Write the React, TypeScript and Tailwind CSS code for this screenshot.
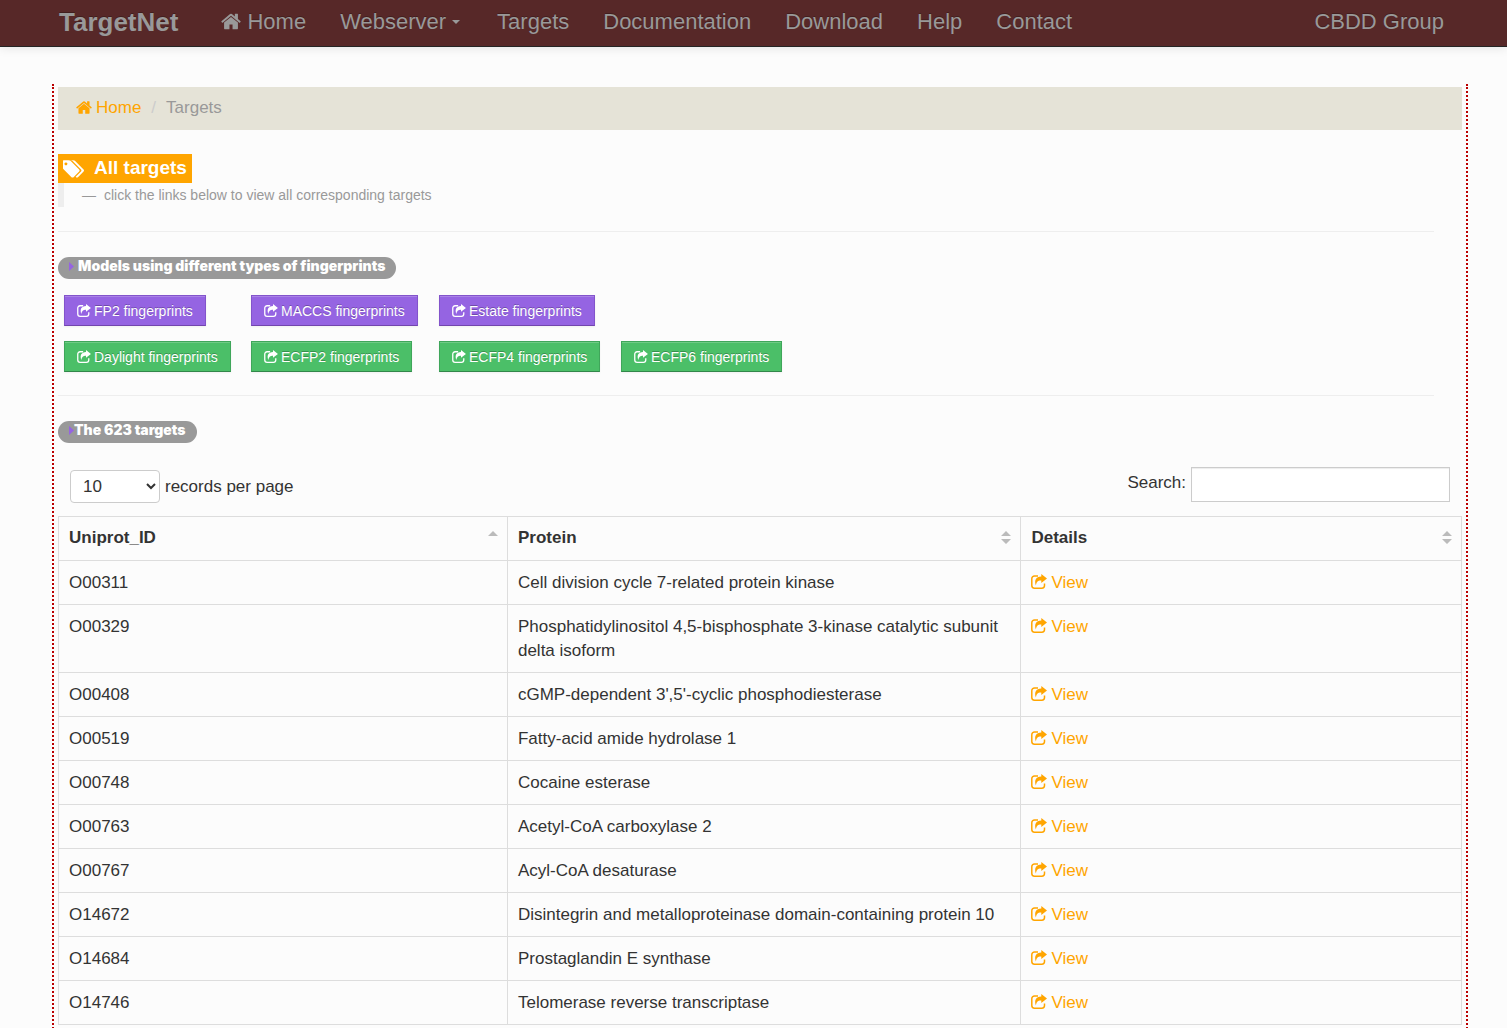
import { useState } from "react";

interface Target {
  id: string;
  protein: string;
}

interface IconProps {
  className?: string;
}

const navLinks = ["Targets", "Documentation", "Download", "Help", "Contact"];

const purpleModels = ["FP2", "MACCS", "Estate"];
const greenModels = ["Daylight", "ECFP2", "ECFP4", "ECFP6"];

const targets: Target[] = [
  { id: "O00311", protein: "Cell division cycle 7-related protein kinase" },
  {
    id: "O00329",
    protein:
      "Phosphatidylinositol 4,5-bisphosphate 3-kinase catalytic subunit delta isoform",
  },
  { id: "O00408", protein: "cGMP-dependent 3',5'-cyclic phosphodiesterase" },
  { id: "O00519", protein: "Fatty-acid amide hydrolase 1" },
  { id: "O00748", protein: "Cocaine esterase" },
  { id: "O00763", protein: "Acetyl-CoA carboxylase 2" },
  { id: "O00767", protein: "Acyl-CoA desaturase" },
  {
    id: "O14672",
    protein: "Disintegrin and metalloproteinase domain-containing protein 10",
  },
  { id: "O14684", protein: "Prostaglandin E synthase" },
  { id: "O14746", protein: "Telomerase reverse transcriptase" },
];

const HomeIcon = ({ className }: IconProps) => (
  <svg className={className} viewBox="64 128 1664 1536" fill="currentColor" aria-hidden="true">
    <path d="M1472 992v480q0 26-19 45t-45 19h-384v-384h-256v384h-384q-26 0-45-19t-19-45v-480q0-1 .5-3t.5-3l575-474 575 474q1 2 1 6zm223-69l-62 74q-8 9-21 11h-3q-13 0-21-7l-692-577-692 577q-12 8-24 7-13-2-21-11l-62-74q-8-10-7-23.5t11-21.5l719-599q32-26 76-26t76 26l244 204v-195q0-14 9-23t23-9h192q14 0 23 9t9 23v408l219 182q10 8 11 21.5t-7 23.5z" />
  </svg>
);

const ShareIcon = ({ className }: IconProps) => (
  <svg className={className} viewBox="0 0 16 15" aria-hidden="true">
    <path
      d="M7 2H3.500A2.700 2.700 0 0 0 .8 4.700V11.500A2.700 2.700 0 0 0 3.500 14.200H10.800A2.700 2.700 0 0 0 13.500 11.500V9.500"
      fill="none"
      stroke="currentColor"
      strokeWidth="1.5"
    />
    <path
      d="M10.300 0L16 4.500L10.300 9V6.600C7.400 6.400 5.600 7.400 4.900 11.500C3 6.500 4.800 2.500 10.300 2.400Z"
      fill="currentColor"
    />
  </svg>
);

const TagsIcon = ({ className }: IconProps) => (
  <svg className={className} viewBox="0 128 1835 1536" fill="currentColor" aria-hidden="true">
    <path d="M384 448q0-53-37.5-90.5t-90.5-37.5-90.5 37.5-37.5 90.5 37.5 90.5 90.5 37.5 90.5-37.5 37.5-90.5zm1067 576q0 53-37 90l-491 492q-39 37-91 37-53 0-90-37l-715-716q-38-37-64.5-101t-26.5-117v-416q0-52 38-90t90-38h416q53 0 117 26.5t102 64.5l715 714q37 39 37 91zm384 0q0 53-37 90l-491 492q-39 37-91 37-36 0-59-14t-53-45l470-470q37-37 37-90 0-52-37-91l-715-714q-38-38-102-64.5t-117-26.5h224q53 0 117 26.5t102 64.5l715 714q37 39 37 91z" />
  </svg>
);

const SortIcon = ({ ascending }: { ascending?: boolean }) => (
  <svg className="mb-[2px] h-[14px] w-[10px] text-[#bbb]" viewBox="0 0 10 14" fill="currentColor" aria-hidden="true">
    <path d={ascending ? "M0 6L5 1L10 6Z" : "M0 6L5 1L10 6ZM0 9H10L5 14Z"} />
  </svg>
);

const SectionPill = ({ text, tight }: { text: string; tight?: boolean }) => (
  <h2
    className={`flex h-[22px] w-fit items-start rounded-full bg-[#999] px-[11px] font-['Inter','Liberation_Sans',sans-serif] text-[14px] leading-[18px] font-black text-white ${tight ? "gap-0" : "gap-1"}`}
  >
    <svg className="mt-[5px] h-[9px] w-[5px] text-[#9564e2]" viewBox="0 0 5 9" fill="currentColor" aria-hidden="true">
      <path d="M0 0L5 4.500L0 9Z" />
    </svg>
    {text}
  </h2>
);

const ModelButton = ({ name, color }: { name: string; color: "purple" | "green" }) => (
  <button
    type="button"
    className={`flex h-[31px] w-fit items-center gap-[3px] border px-3 pt-px text-[14px] whitespace-nowrap text-white [text-shadow:0_-1px_0_rgba(0,0,0,0.25)] shadow-[inset_0_1px_0_rgba(255,255,255,0.2),0_1px_2px_rgba(0,0,0,0.05)] ${
      color === "purple"
        ? "border-[#8354cb] border-b-[#7246ad] bg-[#9564e2]"
        : "border-[#3fa65a] border-b-[#32874a] bg-[#4bbf68]"
    }`}
  >
    <ShareIcon className="mb-[2px] h-[13px] w-[14px]" />
    {name} fingerprints
  </button>
);

const Navbar = () => (
  <nav className="flex h-[47px] items-center border-b border-[#252525] bg-[#572828] pr-[46px] pb-[3px] pl-[59px] text-[22px] text-[#999] shadow-[0_1px_10px_rgba(0,0,0,0.1)] [text-shadow:0_-1px_0_rgba(0,0,0,0.25)]">
    <a href="#" className="mr-[26px] text-[26px] font-bold">
      TargetNet
    </a>
    <a href="#" className="flex items-center gap-[6px] px-[17px]">
      <HomeIcon className="h-[19px] w-[20px]" />
      Home
    </a>
    <a href="#" className="flex items-center gap-[6px] px-[17px]">
      Webserver
      <svg className="mr-[3px] h-[4px] w-[8px]" viewBox="0 0 8 4" fill="currentColor" aria-hidden="true">
        <path d="M0 0H8L4 4Z" />
      </svg>
    </a>
    {navLinks.map((link) => (
      <a key={link} href="#" className="px-[17px]">
        {link}
      </a>
    ))}
    <a href="#" className="ml-auto px-[17px]">
      CBDD Group
    </a>
  </nav>
);

const App = () => {
  const [pageSize, setPageSize] = useState("10");
  const [search, setSearch] = useState("");

  const rows = targets.filter(({ id, protein }) =>
    `${id} ${protein}`.toLowerCase().includes(search.toLowerCase()),
  );

  return (
    <div className="min-h-screen bg-[#fcfcfc] font-['Liberation_Sans',Arial,sans-serif] text-[17px] leading-6 text-[#333]">
      <Navbar />
      <main className="mt-[37px] mr-[39px] ml-[52px] border-x-2 border-dotted border-[#b00] px-1 pt-[3px] pb-6">
        <ol className="flex bg-[#e5e3d7] px-[18px] pt-[9px] pb-[10px] text-[#999]">
          <li>
            <a href="#" className="flex items-center gap-1 text-[#ffa500]">
              <HomeIcon className="mb-[2px] h-[15px] w-[16px]" />
              Home
            </a>
          </li>
          <li className="px-[10px] text-[#ccc]">/</li>
          <li>Targets</li>
        </ol>

        <h1 className="mt-6 flex h-[29px] w-fit items-center gap-[10px] bg-[#ffa500] px-[5px] pb-[2px] text-[19px] font-bold text-white">
          <TagsIcon className="mt-[3px] h-[18px] w-[21px]" />
          All targets
        </h1>
        <p className="border-l-[6px] border-[#eee] pl-[18px] text-[14px] text-[#999]">
          <span className="mr-2">—</span>
          click the links below to view all corresponding targets
        </p>

        <hr className="mt-6 mr-7 border-[#eee]" />
        <div className="mt-[25px]">
          <SectionPill text="Models using different types of fingerprints" />
        </div>
        <div className="mt-4 grid grid-cols-[187px_188px_182px_auto] gap-y-[15px] pl-[6px]">
          {purpleModels.map((name) => (
            <ModelButton key={name} name={name} color="purple" />
          ))}
          <span />
          {greenModels.map((name) => (
            <ModelButton key={name} name={name} color="green" />
          ))}
        </div>

        <hr className="mt-[23px] mr-7 border-[#eee]" />
        <div className="mt-[25px]">
          <SectionPill text="The 623 targets" tight />
        </div>

        <div className="mt-6 flex items-start justify-between px-3 pb-[13px]">
          <label className="flex items-center gap-[5px] pt-[3px]">
            <select
              className="h-[33px] w-[90px] rounded-[4px] border border-[#ccc] bg-white px-2"
              value={pageSize}
              onChange={(e) => setPageSize(e.target.value)}
            >
              <option>10</option>
              <option>25</option>
              <option>50</option>
              <option>100</option>
            </select>
            records per page
          </label>
          <label className="flex gap-[5px] leading-8">
            Search:
            <input
              type="text"
              className="h-[35px] w-[259px] border border-[#ccc] bg-white px-2 shadow-[inset_0_1px_1px_rgba(0,0,0,0.075)] outline-none"
              value={search}
              onChange={(e) => setSearch(e.target.value)}
            />
          </label>
        </div>

        <table className="w-full table-fixed border-collapse text-left [&_td]:border [&_td]:border-[#ddd] [&_td]:px-[10px] [&_td]:pt-[10px] [&_td]:pb-[9px] [&_td]:align-top [&_th]:border [&_th]:border-[#ddd] [&_th]:pt-[9px] [&_th]:pr-[9px] [&_th]:pb-[10px] [&_th]:pl-[10px]">
          <thead>
            <tr>
              <th className="w-[32%]">
                <button type="button" className="flex w-full items-center justify-between font-bold">
                  Uniprot_ID
                  <SortIcon ascending />
                </button>
              </th>
              <th className="w-[36.6%]">
                <button type="button" className="flex w-full items-center justify-between font-bold">
                  Protein
                  <SortIcon />
                </button>
              </th>
              <th>
                <button type="button" className="flex w-full items-center justify-between font-bold">
                  Details
                  <SortIcon />
                </button>
              </th>
            </tr>
          </thead>
          <tbody>
            {rows.map(({ id, protein }) => (
              <tr key={id}>
                <td>{id}</td>
                <td>{protein}</td>
                <td>
                  <a href="#" className="flex w-fit items-center gap-1 text-[#ffa500]">
                    <ShareIcon className="mb-[3px] h-[15px] w-[16px]" />
                    View
                  </a>
                </td>
              </tr>
            ))}
          </tbody>
        </table>
      </main>
    </div>
  );
};

export default App;
